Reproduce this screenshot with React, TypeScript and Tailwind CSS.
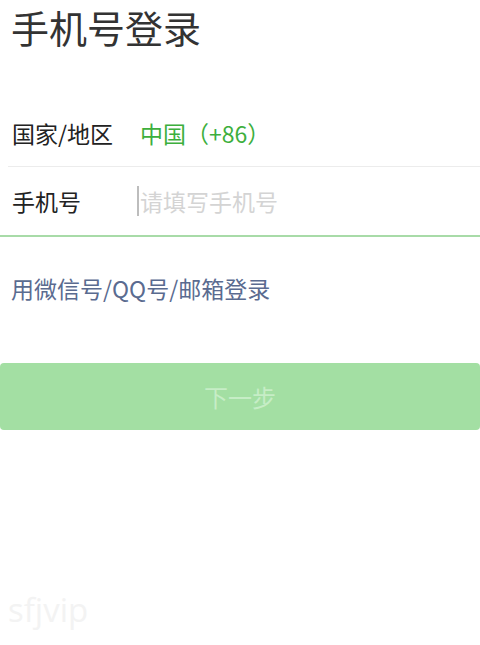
const font = { fontFamily: '"Noto Sans CJK SC", "Noto Sans", sans-serif' }

export default function App() {
	return (
		<div className="relative w-[480px] h-[645px] bg-white overflow-hidden" style={font}>
			{/* Title */}
			<h1 className="pl-[11px] pt-[1px] h-[52px] text-[38px] leading-[52px] text-[#333333] font-normal">
				手机号登录
			</h1>

			{/* Form rows */}
			<div className="mt-[48px]">
				<div className="flex items-center h-[67px] ml-[8px] border-b border-[#ececec]">
					<span className="w-[132px] pl-[4px] text-[23px] text-[#222222]">国家/地区</span>
					<span className="text-[23px] text-[#3daf3d]">中国（+86）</span>
				</div>
				<div className="flex items-center h-[70px] border-b-2 border-[#a8dba8]">
					<span className="w-[137px] pl-[12px] text-[23px] text-[#222222]">手机号</span>
					<div className="flex items-center">
						<div className="w-[2px] h-[30px] bg-[#bdbdbd]" />
						<span className="ml-[1px] text-[23px] text-[#d4d4d4]">请填写手机号</span>
					</div>
				</div>
			</div>

			{/* Alternate login */}
			<div className="mt-[36px] pl-[11px] text-[23px] leading-[30px] text-[#5a6b90]">
				用微信号/QQ号/邮箱登录
			</div>

			{/* Next button */}
			<button className="mt-[60px] w-full h-[67px] rounded-[4px] bg-[#a3dfa3] text-[24px] text-[#c6edc6]">
				下一步
			</button>

			{/* Watermark */}
			<div
				className="absolute left-[8px] top-[585px] text-[33px] text-[#f3f3f3]"
				style={{ fontFamily: '"Open Sans", sans-serif' }}
			>
				sfjvip
			</div>
		</div>
	)
}
